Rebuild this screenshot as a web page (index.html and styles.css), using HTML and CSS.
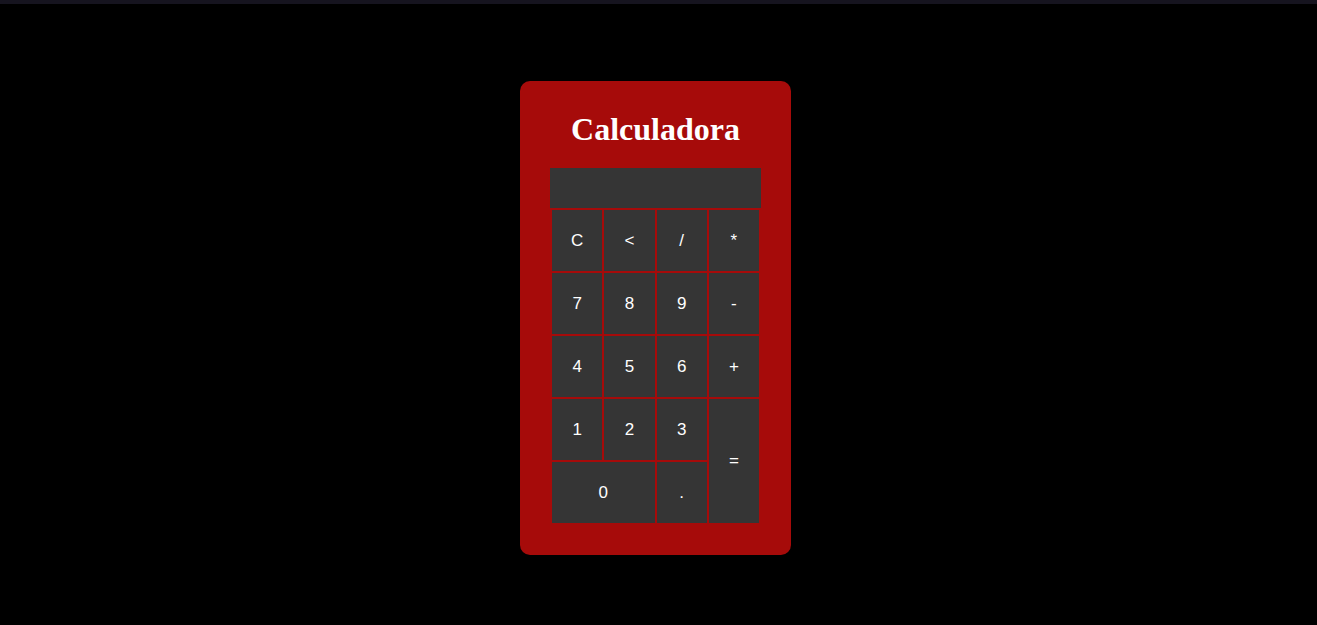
FILE: index.html
```html
<!DOCTYPE html>
<html lang="es">
<head>
<meta charset="utf-8">
<title>Calculadora</title>
<link rel="stylesheet" href="styles.css">
</head>
<body>
<div class="topbar"></div>
<main class="page">
  <div class="calculator">
    <h1 class="title">Calculadora</h1>
    <div class="display"></div>
    <div class="keys">
      <button class="key">C</button>
      <button class="key">&lt;</button>
      <button class="key">/</button>
      <button class="key">*</button>
      <button class="key">7</button>
      <button class="key">8</button>
      <button class="key">9</button>
      <button class="key">-</button>
      <button class="key">4</button>
      <button class="key">5</button>
      <button class="key">6</button>
      <button class="key">+</button>
      <button class="key">1</button>
      <button class="key">2</button>
      <button class="key">3</button>
      <button class="key key-equals">=</button>
      <button class="key key-zero">0</button>
      <button class="key">.</button>
    </div>
  </div>
</main>
</body>
</html>
```
FILE: styles.css
```css
html, body {
  margin: 0;
  padding: 0;
  background: #000;
  height: 100%;
}
body {
  font-family: "Liberation Sans", Arial, sans-serif;
}
.topbar {
  height: 4px;
  background: #16141f;
}
.page {
  display: flex;
  justify-content: center;
  padding: 77px 6px 0 0;
}
.calculator {
  width: 211px;
  padding: 30px 30px 30px;
  background: #a60b0a;
  border-radius: 10px;
}
.title {
  margin: 0 0 20px;
  font-family: "Liberation Serif", "Times New Roman", serif;
  font-size: 32px;
  font-weight: bold;
  line-height: 37px;
  color: #fff;
  text-align: center;
}
.display {
  height: 40px;
  background: #353535;
}
.keys {
  display: grid;
  grid-template-columns: repeat(4, 1fr);
  grid-auto-rows: 61px;
  gap: 2px;
  padding: 2px;
}
.key {
  background: #353535;
  color: #fff;
  border: 0;
  margin: 0;
  padding: 0;
  font-family: "Liberation Sans", Arial, sans-serif;
  font-size: 17px;
}
.key-zero {
  grid-column: 1 / 3;
  grid-row: 5;
}
.key-equals {
  grid-column: 4;
  grid-row: 4 / 6;
}
```
